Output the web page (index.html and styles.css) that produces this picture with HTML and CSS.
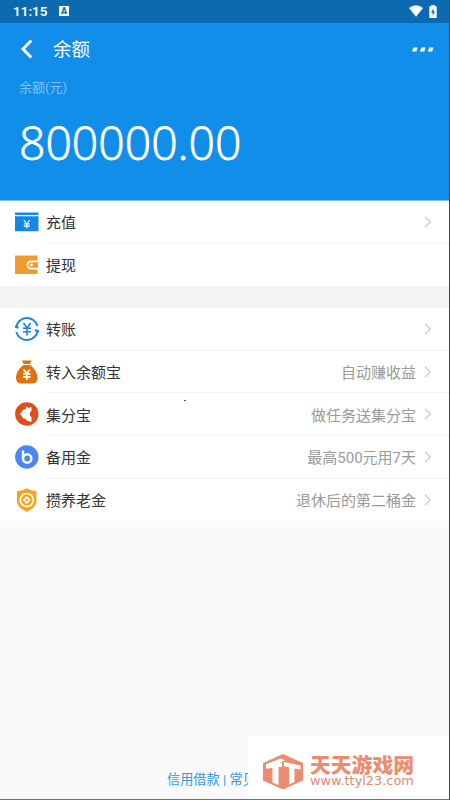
FILE: index.html
```html
<!DOCTYPE html>
<html lang="zh-CN">
<head>
<meta charset="utf-8">
<title>余额</title>
<link rel="stylesheet" href="styles.css">
</head>
<body>
<div class="screen">
  <div class="status">
    <span class="time">11:15</span>
    <span class="ime">A</span>
    <svg class="wifi" width="14" height="12" viewBox="0 0 14 12"><path d="M0 3Q7-2.400 14 3L7 11.800Z" fill="#fff"/></svg>
    <svg class="battery" width="8" height="13" viewBox="0 0 8 13"><path d="M2.300 1.200V0H5.700V1.200H7.700V13H.3V1.200Z" fill="#fff"/><path d="M4.500 3.200L2 7.500H3.600V10.800L6 6.500H4.500Z" fill="#0b6ab0"/></svg>
  </div>
  <header class="hero">
    <div class="nav">
      <svg width="12" height="20" viewBox="0 0 12 20"><path d="M10.300 1.500L2 10L10.300 18.500" fill="none" stroke="#fff" stroke-width="3"/></svg>
      <h1>余额</h1>
      <svg class="more" width="22" height="5" viewBox="0 0 22 5" fill="#fff"><path d="M1.500.5H5.700L4.300 4.500H0ZM9.400.5H13.600L12.200 4.500H7.900ZM17.300.5H21.500L20.100 4.500H15.800Z"/></svg>
    </div>
    <div class="label">余额(元)</div>
    <div class="amount">800000.00</div>
  </header>
  <section class="list first">
    <div class="row">
      <svg class="icon" viewBox="0 0 24 24"><path d="M0 2.500H23.500V5H0ZM0 6.300H23.500V21.300H0Z" fill="#1686e4"/><path d="M8.800 10L11.800 14L14.800 10M11.800 14V18.500M8.800 14H14.800M8.800 16.200H14.800" fill="none" stroke="#fff" stroke-width="1.200"/></svg>
      <div class="body"><span>充值</span><svg class="arrow" viewBox="0 0 8 12"><path d="M1 .8L6.300 6L1 11.200"/></svg></div>
    </div>
    <div class="row">
      <svg class="icon" viewBox="0 0 24 24"><path d="M0 3.500H22.500V22H0Z" fill="#f39a2f"/><path d="M23 9.300H16Q12.500 9.600 12.500 13T16 16.600H23" fill="#f39a2f" stroke="#fff" stroke-width="1.700"/><circle cx="16.500" cy="13" r="1.400" fill="#fff"/></svg>
      <div class="body"><span>提现</span></div>
    </div>
  </section>
  <section class="list">
    <div class="row">
      <svg class="icon" viewBox="0 0 24 24" fill="none" stroke="#1b85dc"><path d="M1 10.500A11 11 0 0 1 22.500 9M22.800 13.500A11 11 0 0 1 1.300 15" stroke-width="1.900"/><path d="M0 9.500L3.500 10.800M23.800 14.500L20 13" stroke-width="2"/><path d="M8.500 6L12 11L15.500 6M12 11V18.500M8 11.300H16M8 14.800H16" stroke-width="1.600"/></svg>
      <div class="body"><span>转账</span><svg class="arrow" viewBox="0 0 8 12"><path d="M1 .8L6.300 6L1 11.200"/></svg></div>
    </div>
    <div class="row">
      <svg class="icon" viewBox="0 0 24 24"><path d="M7 .5H16.500L15 4H8.500ZM8.500 5H15C19 7.500 22.500 13 22.500 18Q22.500 23.500 17 23.500H6.500Q1 23.500 1 18C1 13 4.500 7.500 8.500 5Z" fill="#df7210"/><path d="M8.500 9.500L11.800 13.500L15 9.500M11.800 13.500V20M8 14H15.500M8 16.800H15.500" fill="none" stroke="#fff" stroke-width="1.700"/></svg>
      <div class="body"><span>转入余额宝</span><em>自动赚收益</em><svg class="arrow" viewBox="0 0 8 12"><path d="M1 .8L6.300 6L1 11.200"/></svg></div>
    </div>
    <div class="row">
      <svg class="icon" viewBox="0 0 24 24"><circle cx="11.800" cy="12" r="11.700" fill="#df4f1c"/><path d="M16.500 5V8.500Q13 12 16.500 15.500V20L11.500 18.500L10.500 16.500L8.500 16.500L5 12L8.500 7.500L10.500 7.500L11.500 4.500L13.500 6Z" fill="#fff"/></svg>
      <div class="body"><span>集分宝</span><em>做任务送集分宝</em><svg class="arrow" viewBox="0 0 8 12"><path d="M1 .8L6.300 6L1 11.200"/></svg></div>
    </div>
    <div class="row">
      <svg class="icon" viewBox="0 0 24 24"><circle cx="11.800" cy="12" r="11.700" fill="#4b86f6"/><path d="M8 5.500V13.500" stroke="#fff" stroke-width="2.400"/><circle cx="12.200" cy="13.500" r="4.200" fill="none" stroke="#fff" stroke-width="2.400"/></svg>
      <div class="body"><span>备用金</span><em>最高500元用7天</em><svg class="arrow" viewBox="0 0 8 12"><path d="M1 .8L6.300 6L1 11.200"/></svg></div>
    </div>
    <div class="row">
      <svg class="icon" viewBox="0 0 24 24"><path d="M11.800 .3Q15.500 3 21.500 3.300V13C21.500 18 17 21.500 11.800 23.800C6.500 21.500 2 18 2 13V3.300Q8 3 11.800 .3Z" fill="#f6a61c"/><circle cx="11.800" cy="12" r="6.500" fill="none" stroke="#fff" stroke-width="1.600"/><path d="M11.800 9.200L14.600 12L11.800 14.800L9 12Z" fill="none" stroke="#fff" stroke-width="1.600"/></svg>
      <div class="body"><span>攒养老金</span><em>退休后的第二桶金</em><svg class="arrow" viewBox="0 0 8 12"><path d="M1 .8L6.300 6L1 11.200"/></svg></div>
    </div>
  </section>
  <footer class="links">信用借款 | 常见</footer>
  <i class="speck"></i>
  <div class="mark">
    <svg width="40" height="36" viewBox="0 0 40 36"><path d="M20 0L40 9V26.500L20 35.500L0 26.500V9Z" fill="#eb8c70"/><path d="M3 10.200L17.500 4.500L22 6.200L17 8.700H19V12.800L15.500 13V31L9.500 28.500V14L3 14.800ZM21 8L37.500 11.500V15.800L31.500 14.500V28L26 30.500V13.200L21 12.200Z" fill="#fff"/></svg>
    <div><b>天天游戏网</b><small>www.ttyl23.com</small></div>
  </div>
</div>
</body>
</html>
```
FILE: styles.css
```css
* { box-sizing: border-box; }
body { margin: 0; }
.screen {
  position: relative;
  display: flex;
  flex-direction: column;
  width: 450px;
  height: 800px;
  overflow: hidden;
  background: #fafafa;
  border-right: 1px solid #46494c;
  border-bottom: 1px solid #5f7b74;
  font-family: Roboto, "Noto Sans CJK SC", sans-serif;
  color: #333;
}
.status {
  display: flex;
  align-items: center;
  height: 23px;
  padding: 0 12px 1px 13px;
  background: #0b6ab0;
  color: #fff;
}
.time { font-size: 13.500px; font-weight: 600; width: 46px; }
.ime {
  width: 10px;
  height: 10px;
  background: #fff;
  color: #0b6ab0;
  font-size: 9px;
  line-height: 10px;
  font-weight: 900;
  text-align: center;
}
.wifi { margin-left: auto; }
.battery { margin-left: 6px; }
.hero { height: 178px; background: #118eea; color: #fff; border-bottom: 1px solid #7cc0f3; }
.nav { display: flex; align-items: center; height: 52px; padding: 0 15px 0 21px; }
h1 { margin: 2px 0 0 20px; font-size: 18.500px; line-height: 28px; font-weight: 400; }
.more { margin-left: auto; }
.label { padding-left: 19px; margin-top: 2px; font-size: 13px; line-height: 22px; color: #7fc5fa; }
.amount {
  margin-top: 13px;
  padding-left: 19px;
  font: 300 46.300px/62px "Open Sans", "Noto Sans", sans-serif;
  -webkit-text-stroke: .8px #fff;
}
.list { background: #fff; }
.first { border-bottom: 22px solid #f4f4f4; }
.row { display: flex; align-items: center; height: 42.700px; padding-left: 15px; }
.first .row { height: 42.500px; }
.icon { width: 24px; height: 24px; margin-top: -1px; }
.body {
  display: flex;
  align-items: center;
  flex: 1;
  height: 100%;
  margin-left: 7px;
  padding-right: 17px;
  border-bottom: 1px solid #f2f2f2;
  font-size: 15px;
}
.row:last-child .body { border-bottom-color: transparent; }
.body em { margin-left: auto; font-style: normal; color: #999; }
.arrow { width: 8px; height: 12px; margin-left: auto; fill: none; stroke: #ccc; stroke-width: 1.300; }
em + .arrow { margin-left: 8px; }
.links {
  width: 248px;
  margin-top: auto;
  padding: 0 0 9px 167px;
  overflow: hidden;
  white-space: nowrap;
  font-size: 13.200px;
  line-height: 20px;
  color: #3097e4;
}
.speck { position: absolute; left: 184px; top: 400px; width: 2px; height: 1px; background: #555; }
.mark {
  position: absolute;
  left: 248px;
  top: 736px;
  display: flex;
  gap: 7px;
  width: 202px;
  height: 64px;
  padding: 18px 0 0 15px;
  background: #fff;
  color: #eb8c70;
}
.mark svg { flex: none; }
.mark div { display: flex; flex-direction: column; gap: 1px; }
.mark b { font: 900 20.800px/20px "Noto Sans CJK SC", sans-serif; }
.mark small { font: 12.900px/12px "DejaVu Sans", sans-serif; color: #dc8b75; white-space: nowrap; }
```
